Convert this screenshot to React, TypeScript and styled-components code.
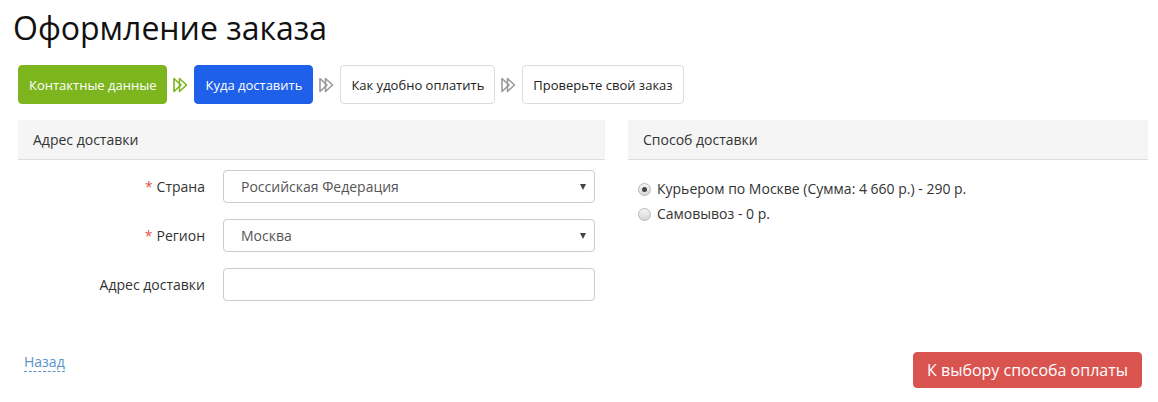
import React from "react";
import styled, { createGlobalStyle } from "styled-components";

const Global = createGlobalStyle`
  html, body { margin: 0; padding: 0; background: #fff; }
  body { font-family: "Open Sans", "Noto Sans", Arial, sans-serif; color: #333; }
  * { box-sizing: border-box; }
`;

const Page = styled.div`
  width: 1158px;
  padding: 0 16px 0 18px;
`;

const Title = styled.h1`
  margin: 0 0 0 -5px;
  padding-top: 8px;
  font-size: 32px;
  line-height: 40px;
  font-weight: 400;
  color: #111;
`;

const Steps = styled.div`
  display: flex;
  align-items: center;
  gap: 5px;
  margin-top: 17px;
`;

const Step = styled.div<{ $variant: "done" | "active" | "todo" }>`
  height: 39px;
  display: flex;
  align-items: center;
  padding: 0 10px;
  border-radius: 4px;
  font-size: 13px;
  border: 1px solid
    ${(p) => (p.$variant === "done" ? "#7cb51e" : p.$variant === "active" ? "#1f60eb" : "#dcdcdc")};
  background: ${(p) => (p.$variant === "done" ? "#7cb51e" : p.$variant === "active" ? "#1f60eb" : "#fff")};
  color: ${(p) => (p.$variant === "todo" ? "#222" : "#fff")};
`;

const ArrowIcon = ({ color }: { color: string }) => (
  <svg width="17" height="18" viewBox="0 0 17 18" style={{ flex: "none" }}>
    <path d="M2 2.5 L2 15.5 L9 9 Z" fill="none" stroke={color} strokeWidth="1.6" strokeLinejoin="round" />
    <path d="M7.5 2.5 L7.5 15.5 L14.5 9 Z" fill="none" stroke={color} strokeWidth="1.6" strokeLinejoin="round" />
  </svg>
);

const Columns = styled.div`
  display: grid;
  grid-template-columns: 587px 520px;
  gap: 23px;
  margin-top: 16px;
`;

const Panel = styled.section``;

const PanelHeader = styled.div`
  height: 40px;
  display: flex;
  align-items: center;
  padding-left: 15px;
  background: #f5f5f5;
  border-bottom: 1px solid #dedede;
  font-size: 14px;
  color: #333;
`;

const Form = styled.div`
  display: flex;
  flex-direction: column;
  gap: 16px;
  padding: 10px 10px 0 0;
`;

const Row = styled.div`
  display: grid;
  grid-template-columns: 187px 1fr;
  column-gap: 18px;
  align-items: center;
`;

const Label = styled.label`
  text-align: right;
  font-size: 14px;
  color: #333;
`;

const Req = styled.span`
  color: #d9534f;
  margin-right: 4px;
`;

const SelectWrap = styled.div`
  position: relative;
`;

const Select = styled.select`
  appearance: none;
  -webkit-appearance: none;
  width: 100%;
  height: 33px;
  padding: 0 30px 0 17px;
  border: 1px solid #ccc;
  border-radius: 4px;
  background: #fff;
  font-family: inherit;
  font-size: 14px;
  color: #555;
  outline: none;
`;

const Caret = styled.span`
  position: absolute;
  right: 9px;
  top: 50%;
  margin-top: -3px;
  width: 0;
  height: 0;
  border-left: 3.5px solid transparent;
  border-right: 3.5px solid transparent;
  border-top: 6px solid #444;
  pointer-events: none;
`;

const Input = styled.input`
  width: 100%;
  height: 33px;
  padding: 0 12px;
  border: 1px solid #ccc;
  border-radius: 4px;
  font-family: inherit;
  font-size: 14px;
  outline: none;
`;

const Radios = styled.div`
  display: flex;
  flex-direction: column;
  gap: 7px;
  padding: 20px 0 0 10px;
`;

const RadioRow = styled.label`
  display: flex;
  align-items: center;
  gap: 6px;
  font-size: 14px;
  color: #333;
  line-height: 18px;
`;

const RadioDot = styled.span<{ $checked?: boolean }>`
  width: 13px;
  height: 13px;
  border-radius: 50%;
  border: 1px solid #b8b8b8;
  background: linear-gradient(#f4f4f4, #d8d8d8);
  display: flex;
  align-items: center;
  justify-content: center;
  flex: none;
  &::after {
    content: "";
    width: 5px;
    height: 5px;
    border-radius: 50%;
    background: ${(p) => (p.$checked ? "#444" : "transparent")};
  }
`;

const Footer = styled.div`
  display: flex;
  justify-content: space-between;
  align-items: flex-start;
  margin-top: 51px;
`;

const BackLink = styled.a`
  margin-left: 6px;
  margin-top: 1px;
  font-size: 14px;
  color: #5b93c9;
  text-decoration: none;
  border-bottom: 1px dashed #5b93c9;
  line-height: 18px;
`;

const NextButton = styled.button`
  height: 36px;
  padding: 0 13px;
  border: 1px solid #d9534f;
  border-radius: 4px;
  background: #d9534f;
  color: #fff;
  font-family: inherit;
  font-size: 16px;
  cursor: pointer;
`;

export default function App() {
  return (
    <Page>
      <Global />
      <Title>Оформление заказа</Title>
      <Steps>
        <Step $variant="done">Контактные данные</Step>
        <ArrowIcon color="#7cb51e" />
        <Step $variant="active">Куда доставить</Step>
        <ArrowIcon color="#9a9a9a" />
        <Step $variant="todo">Как удобно оплатить</Step>
        <ArrowIcon color="#9a9a9a" />
        <Step $variant="todo">Проверьте свой заказ</Step>
      </Steps>
      <Columns>
        <Panel>
          <PanelHeader>Адрес доставки</PanelHeader>
          <Form>
            <Row>
              <Label>
                <Req>*</Req>Страна
              </Label>
              <SelectWrap>
                <Select defaultValue="ru">
                  <option value="ru">Российская Федерация</option>
                </Select>
                <Caret />
              </SelectWrap>
            </Row>
            <Row>
              <Label>
                <Req>*</Req>Регион
              </Label>
              <SelectWrap>
                <Select defaultValue="msk">
                  <option value="msk">Москва</option>
                </Select>
                <Caret />
              </SelectWrap>
            </Row>
            <Row>
              <Label>Адрес доставки</Label>
              <Input />
            </Row>
          </Form>
        </Panel>
        <Panel>
          <PanelHeader>Способ доставки</PanelHeader>
          <Radios>
            <RadioRow>
              <RadioDot $checked />
              Курьером по Москве (Сумма: 4 660 р.) - 290 р.
            </RadioRow>
            <RadioRow>
              <RadioDot />
              Самовывоз - 0 р.
            </RadioRow>
          </Radios>
        </Panel>
      </Columns>
      <Footer>
        <BackLink href="#">Назад</BackLink>
        <NextButton>К выбору способа оплаты</NextButton>
      </Footer>
    </Page>
  );
}
